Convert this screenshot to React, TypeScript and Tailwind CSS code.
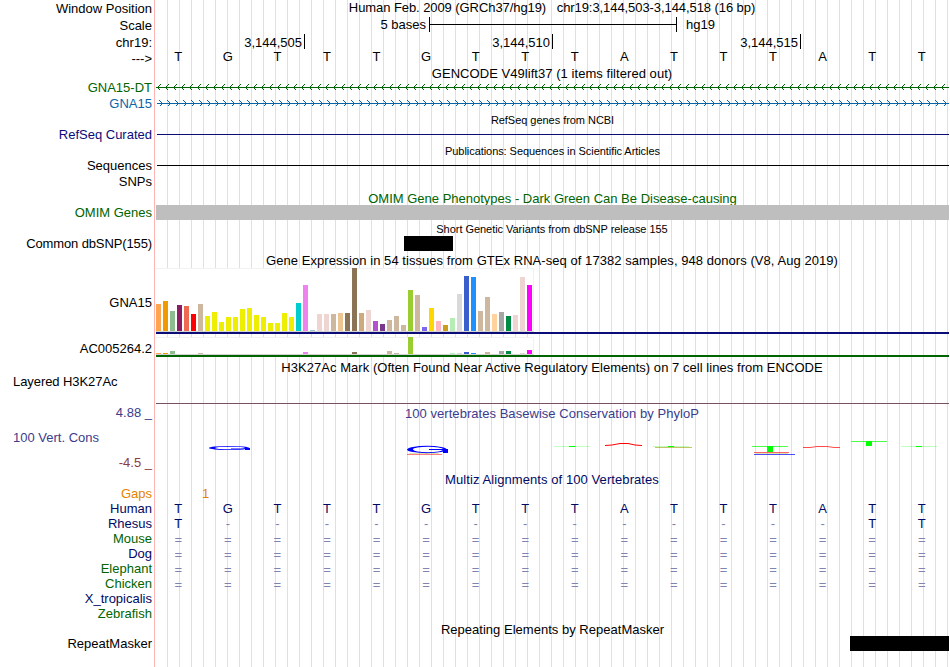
import React from "react";

const BASES = "TGTTTGTTTATTTATT".split("");

const EXPRESSION: [string, number, number][] = [
	["#ffa54f", 27, 1],
	["#ee9a00", 30, 1],
	["#8fbc8f", 20, 3],
	["#8b1c62", 26, 0],
	["#ee6a50", 25, 0],
	["#ff0000", 17, 0],
	["#cdb79e", 27, 1],
	["#eeee00", 15, 0],
	["#eeee00", 19, 0],
	["#eeee00", 9, 0],
	["#eeee00", 14, 0],
	["#eeee00", 14, 0],
	["#eeee00", 22, 0],
	["#eeee00", 23, 0],
	["#eeee00", 16, 0],
	["#eeee00", 14, 0],
	["#eeee00", 8, 0],
	["#eeee00", 8, 0],
	["#eeee00", 18, 0],
	["#eeee00", 14, 0],
	["#00cdcd", 28, 0],
	["#ee82ee", 46, 2],
	["#9ac0cd", 1, 0],
	["#eed5d2", 17, 0],
	["#eed5d2", 17, 0],
	["#cdb79e", 17, 0],
	["#eec591", 18, 0],
	["#8b7355", 18, 0],
	["#8b7355", 63, 2],
	["#cdaa7d", 18, 0],
	["#eed5d2", 21, 0],
	["#b452cd", 10, 0],
	["#7a378b", 7, 0],
	["#cdb79e", 11, 3],
	["#cdb79e", 15, 1],
	["#cdb79e", 6, 0],
	["#9acd32", 41, 17],
	["#cdb79e", 36, 0],
	["#7a67ee", 4, 0],
	["#ffd700", 23, 0],
	["#ffb6c1", 10, 0],
	["#cd9b1d", 6, 0],
	["#b4eeb4", 13, 1],
	["#d9d9d9", 37, 1],
	["#3a5fcd", 55, 2],
	["#1e90ff", 54, 1],
	["#cdb79e", 20, 0],
	["#cdb79e", 34, 2],
	["#ffd39b", 17, 0],
	["#a6a6a6", 19, 3],
	["#008b45", 15, 3],
	["#eed5d2", 16, 0],
	["#eed5d2", 54, 1],
	["#ff00ff", 46, 4],
];

const SPECIES = [
	{ name: "Human", color: "text-[#000a64]", row: BASES },
	{ name: "Rhesus", color: "text-[#000a64]", row: "T-------------TT".split("") },
	{ name: "Mouse", color: "text-[#006400]", row: Array(16).fill("=") },
	{ name: "Dog", color: "text-[#000a64]", row: Array(16).fill("=") },
	{ name: "Elephant", color: "text-[#006400]", row: Array(16).fill("=") },
	{ name: "Chicken", color: "text-[#006400]", row: Array(16).fill("=") },
	{ name: "X_tropicalis", color: "text-[#000a64]", row: [] },
	{ name: "Zebrafish", color: "text-[#006400]", row: [] },
];

interface RowProps {
	label?: string;
	height: string;
	color?: string;
	labelClass?: string;
	children?: React.ReactNode;
}

const Row: React.FC<RowProps> = ({
	label,
	height,
	color = "text-black",
	labelClass = "text-right",
	children,
}) => (
	<div className={`flex shrink-0 ${height}`}>
		<div className={`w-[155px] shrink-0 pr-[3px] leading-4 ${color} ${labelClass}`}>
			{label}
		</div>
		<div className="w-[794px] shrink-0">{children}</div>
	</div>
);

interface TitleProps {
	height: string;
	text: string;
	className?: string;
}

const Title: React.FC<TitleProps> = ({ height, text, className = "" }) => (
	<Row height={height}>
		<p className={`text-center leading-4 ${className}`}>{text}</p>
	</Row>
);

const letterClass = (item: string) => {
	if (item === "=") return "pt-px text-[#8084b1]";
	if (item === "-") return "text-[#8084b1]";
	return "";
};

const Letters: React.FC<{ items: string[] }> = ({ items }) => (
	<div className="grid w-[793px] -ml-[1.5px] grid-cols-16 text-center leading-4">
		{items.map((item, i) => (
			<span key={i} className={letterClass(item)}>
				{item}
			</span>
		))}
	</div>
);

const Strand: React.FC<{ reverse?: boolean }> = ({ reverse }) => (
	<svg
		width="794"
		height="16"
		className="block"
		fill="none"
		stroke={reverse ? "#006400" : "#0c64a8"}
		shapeRendering="crispEdges"
	>
		<path d={reverse ? "M1 7.5H794" : "M2 7.5H794"} />
		{Array.from({ length: 99 }, (_, i) => (
			<path
				key={i}
				d={
					reverse
						? `M${i * 8 + 5.5} 4.5L${i * 8 + 2.5} 7.5L${i * 8 + 5.5} 10.5`
						: `M${i * 8 + 4.5} 4.5L${i * 8 + 7.5} 7.5L${i * 8 + 4.5} 10.5`
				}
			/>
		))}
	</svg>
);

const Bars: React.FC<{ series: 1 | 2; box: string }> = ({ series, box }) => (
	<div
		className={`ml-px flex w-[378px] items-end gap-[2px] border border-l-0 border-[#f2f2f2] border-b-[#d3d3d3] bg-white ${box}`}
	>
		{EXPRESSION.map((item, i) => (
			<span
				key={i}
				className={`w-[5px] shrink-0 ${item[series] > 62 ? "-mt-px" : ""}`}
				style={{ height: item[series], backgroundColor: item[0] }}
			/>
		))}
	</div>
);

const Conservation: React.FC = () => (
	<svg width="794" height="20" viewBox="155 438 794 20" className="block" fill="none">
		<g fill="#0000ff" fillRule="evenodd">
			<path d="M209 448a20 2 0 1 0 40 0a20 2 0 1 0 -40 0M215 448a15 1.3 0 1 0 30 0a15 1.3 0 1 0 -30 0" />
			<path d="M245 448h5v2h-5zM407 449.5a20 3.7 0 1 0 40 0a20 3.7 0 1 0 -40 0M413 449.5a15 2.7 0 1 0 30 0a15 2.7 0 1 0 -30 0" />
			<path d="M443 449h5v4h-5z" />
		</g>
		<g stroke="#0000ff">
			<path d="M231 448.5h15" strokeWidth="0.5" />
			<path d="M429 449.5h14" strokeWidth="1" />
			<path d="M754 454.5h41" strokeWidth="0.7" />
		</g>
		<g stroke="#ff0000">
			<path d="M407 454.5h35" strokeWidth="0.5" />
			<path d="M605 445.5L612 445L620 443.5H628L635 445L642 445.5" />
			<path d="M754 452.5h35" strokeWidth="0.6" />
			<path d="M803 447.5H810L817 446.5H827L834 447.5H840" strokeWidth="0.7" />
		</g>
		<g stroke="#00ff00">
			<path d="M554 446.5h36M653 446.5h36M901 446.5h36" strokeWidth="0.25" />
			<path d="M752 446.5h36M851 441.5h36" strokeWidth="0.7" />
			<path d="M569 446.5h6M668 446.5h6M916 446.5h6" />
			<path d="M767 449h6" strokeWidth="6" />
			<path d="M866 443.5h6" strokeWidth="5" />
		</g>
		<g stroke="#9a9a00">
			<path d="M655 447.5h37" strokeWidth="0.6" />
			<path d="M756 453.5h32M409 453.5h30" strokeWidth="0.3" />
		</g>
	</svg>
);

const App: React.FC = () => (
	<main className="relative h-[667px] w-[950px] overflow-hidden bg-white font-['Liberation_Sans',Arial,sans-serif] text-[13px] text-black">
		<div className="absolute inset-y-0 left-[154px] w-px bg-[#ffb4b4]" />
		<div className="absolute inset-y-0 left-[167px] w-[782px] bg-[linear-gradient(to_right,#dcdcff_1px,transparent_1px)] bg-[length:12px_100%]" />
		<div className="relative flex flex-col">
			<Row label="Window Position" height="h-[17px]" labelClass="text-right pt-px">
				<p className="whitespace-pre text-center leading-4 tracking-[-0.075px]">
					{"Human Feb. 2009 (GRCh37/hg19)   chr19:3,144,503-3,144,518 (16 bp)"}
				</p>
			</Row>
			<Row label="Scale" height="h-[17px]" labelClass="text-right pt-px">
				<div className="flex leading-4">
					<span className="w-[271px] text-right">5 bases</span>
					<span className="ml-[3px] flex h-[15px] w-[248px] items-center border-x border-black">
						<span className="h-px w-full bg-black" />
					</span>
					<span className="ml-[9px]">hg19</span>
				</div>
			</Row>
			<Row label="chr19:" height="h-4" labelClass="text-right pt-px">
				<div className="flex leading-[18px]">
					<span className="mr-[98px] h-[15px] w-[150px] border-r border-black pr-[2px] text-right">
						3,144,505
					</span>
					<span className="mr-[98px] h-[15px] w-[150px] border-r border-black pr-[2px] text-right">
						3,144,510
					</span>
					<span className="h-[15px] w-[150px] border-r border-black pr-[2px] text-right">
						3,144,515
					</span>
				</div>
			</Row>
			<Row label="--->" height="h-4" labelClass="text-right pt-px">
				<div className="-mt-px">
					<Letters items={BASES} />
				</div>
			</Row>
			<Title
				height="h-[14px]"
				text="GENCODE V49lift37 (1 items filtered out)"
				className="tracking-[0.05px]"
			/>
			<Row label="GNA15-DT" height="h-4" color="text-[#006400]">
				<Strand reverse />
			</Row>
			<Row label="GNA15" height="h-4" color="text-[#0c64a8]">
				<Strand />
			</Row>
			<Title
				height="h-[15px]"
				text="RefSeq genes from NCBI"
				className="pl-px text-[11px] tracking-[-0.04px]"
			/>
			<Row label="RefSeq Curated" height="h-4" color="text-[#0c0c78]">
				<div className="ml-[2px] h-2 border-b border-[#0c0c78]" />
			</Row>
			<Title
				height="h-[15px]"
				text="Publications: Sequences in Scientific Articles"
				className="pl-px text-[11px] tracking-[-0.06px]"
			/>
			<Row label="Sequences" height="h-4">
				<div className="ml-[2px] h-2 border-b border-black" />
			</Row>
			<Row label="SNPs" height="h-4" />
			<Title
				height="h-[15px]"
				text="OMIM Gene Phenotypes - Dark Green Can Be Disease-causing"
				className="h-[15px] overflow-hidden pt-px pl-px text-[#006400]"
			/>
			<Row label="OMIM Genes" height="h-4" color="text-[#006400]">
				<div className="ml-px h-[15px] bg-[#bebebe]" />
			</Row>
			<Title
				height="h-[15px]"
				text="Short Genetic Variants from dbSNP release 155"
				className="text-[11px] tracking-[-0.04px]"
			/>
			<Row
				label="Common dbSNP(155)"
				height="h-4"
				labelClass="text-right tracking-[-0.12px]"
			>
				<div className="ml-[249px] h-[15px] w-[49px] bg-black" />
			</Row>
			<Title
				height="h-4"
				text="Gene Expression in 54 tissues from GTEx RNA-seq of 17382 samples, 948 donors (V8, Aug 2019)"
				className="pt-px tracking-[0.05px]"
			/>
			<Row label="GNA15" height="h-[69px]" labelClass="text-right pt-[27px]">
				<Bars series={1} box="h-16" />
				<div className="ml-px h-[2px] bg-[#0c0c78]" />
			</Row>
			<Row label="AC005264.2" height="h-[23px]" labelClass="text-right pt-1">
				<Bars series={2} box="h-[18px]" />
				<div className="ml-px h-[2px] bg-[#006400]" />
			</Row>
			<Title
				height="h-[14px]"
				text="H3K27Ac Mark (Often Found Near Active Regulatory Elements) on 7 cell lines from ENCODE"
				className="tracking-[0.045px]"
			/>
			<Row
				label="Layered H3K27Ac"
				height="h-[31px]"
				labelClass="text-left pl-[13px] tracking-[-0.07px]"
			>
				<div className="ml-px h-[30px] border-b border-[#785064]" />
			</Row>
			<Row label="4.88 _" height="h-6" color="text-[#3c3c8c]">
				<p className="pt-px text-center leading-4 tracking-[0.04px] text-[#3c3c8c]">
					100 vertebrates Basewise Conservation by PhyloP
				</p>
			</Row>
			<Row
				label="100 Vert. Cons"
				height="h-[26px]"
				color="text-[#3c3c8c]"
				labelClass="text-left pl-[13px] pt-px"
			>
				<div className="pt-[9px]">
					<Conservation />
				</div>
			</Row>
			<Row label="-4.5 _" height="h-4" color="text-[#8c3c3c]" />
			<Title
				height="h-[15px]"
				text="Multiz Alignments of 100 Vertebrates"
				className="pt-px tracking-[0.08px] text-[#000a64]"
			/>
			<Row label="Gaps" height="h-[15px]" color="text-[#e68200]">
				<p className="pl-[47px] leading-4 text-[#e68200]">1</p>
			</Row>
			{SPECIES.map((item) => (
				<Row key={item.name} label={item.name} height="h-[15px]" color={item.color}>
					<div className="text-[#000a64]">
						<Letters items={item.row} />
					</div>
				</Row>
			))}
			<Title
				height="h-[15px]"
				text="Repeating Elements by RepeatMasker"
				className="pt-px pl-px tracking-[0.02px]"
			/>
			<Row label="RepeatMasker" height="h-4">
				<div className="ml-[695px] h-[15px] bg-black" />
			</Row>
		</div>
	</main>
);

export default App;
